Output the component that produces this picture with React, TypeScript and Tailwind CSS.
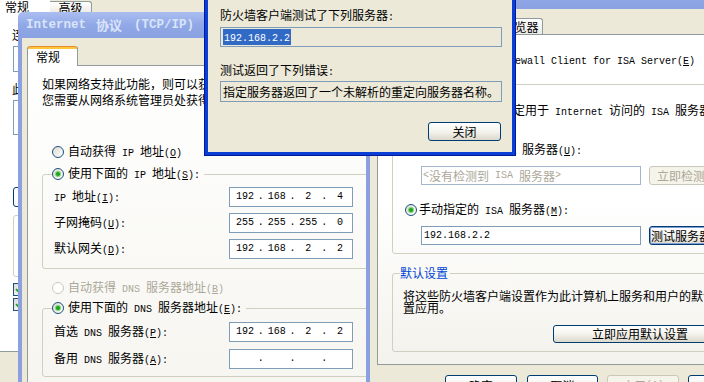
import React from 'react';

const MONO = "font-['Liberation_Mono',monospace] text-[10px] whitespace-pre";

// Splits a label into CJK runs and ASCII runs (ASCII is half width, like SimSun).
// "&X" marks the mnemonic letter, drawn underlined.
function T({ s }: { s: string }) {
  const out: React.ReactNode[] = [];
  const re = /&(.)|[ -%'-~]+|[^ -~]+/g;
  let m: RegExpExecArray | null;
  let k = 0;
  while ((m = re.exec(s)) !== null) {
    if (m[1] !== undefined) {
      const ascii = /[ -~]/.test(m[1]);
      out.push(
        <span key={k++} className={ascii ? `${MONO} underline underline-offset-[1px]` : 'underline'}>
          {m[1]}
        </span>
      );
    } else if (/^[ -~]/.test(m[0])) {
      out.push(
        <span key={k++} className={MONO}>
          {m[0]}
        </span>
      );
    } else {
      out.push(<span key={k++}>{m[0]}</span>);
    }
  }
  return <>{out}</>;
}

function Radio({ on = false, off = false }: { on?: boolean; off?: boolean }) {
  return (
    <span
      className={`flex h-[12px] w-[12px] shrink-0 items-center justify-center rounded-full border ${
        off ? 'border-[#cac8bb] bg-white' : 'border-[#1c5180] bg-gradient-to-br from-[#dcdad0] to-white'
      }`}
    >
      {on && <span className="h-[4px] w-[4px] rounded-full bg-[#21a121] shadow-[0_0_0_1px_#7ad776]" />}
    </span>
  );
}

function Check({ on = true }: { on?: boolean }) {
  return (
    <span className="flex h-[13px] w-[13px] shrink-0 items-center justify-center border border-[#1c5180] bg-gradient-to-br from-[#dcdad0] to-white">
      {on && (
        <svg width="9" height="9" viewBox="0 0 9 9">
          <path d="M1 4.2 L3.5 6.7 L8 2" stroke="#21a121" strokeWidth="1.8" fill="none" />
        </svg>
      )}
    </span>
  );
}

function Btn({
  children,
  className = '',
  disabled = false,
  focus = false,
}: {
  children: React.ReactNode;
  className?: string;
  disabled?: boolean;
  focus?: boolean;
}) {
  return (
    <div
      className={`flex shrink-0 items-center justify-center whitespace-nowrap rounded-[3px] border ${
        disabled
          ? 'border-[#c9c7ba] bg-[#f5f4ea] text-[#aca899]'
          : 'border-[#003c74] bg-gradient-to-b from-white via-[#f4f3ee] to-[#dcd8cc]'
      } ${focus ? 'shadow-[inset_0_0_0_1px_#7f9fd6]' : ''} ${className}`}
    >
      {children}
    </div>
  );
}

function Ip({ v }: { v: string[] }) {
  return (
    <div className="flex h-full w-[124px] items-center border border-[#7f9db9] bg-white pl-[3px]">
      {v.map((x, i) => (
        <React.Fragment key={i}>
          {i > 0 && <span className={`w-[8px] text-center ${MONO}`}>.</span>}
          <span className={`w-[24px] text-center ${MONO}`}>{x}</span>
        </React.Fragment>
      ))}
    </div>
  );
}

function BackWindow() {
  return (
    <div className="absolute left-0 top-0 z-0 flex h-[382px] w-[200px] flex-col">
      <div className="flex h-[13px] shrink-0 items-end">
        <div className="flex h-[13px] w-[50px] items-center bg-white pl-[5px]">常规</div>
        <div className="flex h-[12px] w-[42px] items-center justify-center rounded-tr-[3px] border-r border-t border-[#919b9c] bg-gradient-to-b from-white to-[#ecebe5]">
          高级
        </div>
      </div>
      <div className="flex h-[339px] shrink-0 flex-col border-b border-[#919b9c] bg-white pl-[12px] pt-[16px]">
        <div className="h-[12px] whitespace-nowrap leading-[12px]">
          <T s="连接时使用:" />
        </div>
        <div className="ml-[1px] mt-[5px] h-[26px] w-[160px] border border-[#7f9db9]" />
        <div className="mt-[11px] h-[12px] whitespace-nowrap leading-[12px]">
          <T s="此连接使用下列项目(&O):" />
        </div>
        <div className="ml-[1px] mt-[5px] h-[35px] w-[160px] border border-[#7f9db9]" />
        <div className="ml-[1px] mt-[52px] h-[20px] w-[80px] rounded-[3px] border border-[#003c74]" />
        <div className="ml-[1px] mt-[8px] h-[62px] w-[160px] rounded-[3px] border border-[#d0d0bf]" />
        <div className="ml-[1px] mt-[6px]">
          <Check />
        </div>
        <div className="ml-[1px] mt-[2px]">
          <Check />
        </div>
      </div>
    </div>
  );
}

const ipRows: [string, string[]][] = [
  ['IP 地址(&I):', ['192', '168', '2', '4']],
  ['子网掩码(&U):', ['255', '255', '255', '0']],
  ['默认网关(&D):', ['192', '168', '2', '2']],
];

const dnsRows: [string, string[]][] = [
  ['首选 DNS 服务器(&P):', ['192', '168', '2', '2']],
  ['备用 DNS 服务器(&A):', ['', '', '', '']],
];

function TcpIpWindow() {
  return (
    <div className="absolute left-[18px] top-[12px] z-10 flex h-[380px] w-[380px] flex-col">
      <div className="flex h-[26px] shrink-0 items-center whitespace-nowrap rounded-t-[5px] bg-gradient-to-b from-[#aabef0] via-[#91a8e7] to-[#8aa1e2] pl-[8px] font-bold text-[#dae4f8]">
        <span className="font-['Liberation_Mono',monospace] text-[12.5px]">Internet</span>
        <span className="ml-[10px] text-[13px]">协议</span>
        <span className="ml-[12px] font-['Liberation_Mono',monospace] text-[12.5px]">(TCP/IP)</span>
      </div>
      <div className="flex flex-1 flex-col border-l-[4px] border-[#8ba0e0] bg-[#ece9d8] pl-[5px] pt-[8px]">
        <div className="flex h-[19px] shrink-0">
          <div className="relative z-10 flex h-[20px] w-[51px] flex-col rounded-t-[3px] border-x border-[#919b9c] bg-white">
            <div className="h-[3px] rounded-t-[3px] bg-[#ffc83c] shadow-[inset_0_1px_0_#e68b2c]" />
            <div className="flex flex-1 items-center pb-[2px] pl-[8px]">常规</div>
          </div>
        </div>
        <div className="flex-1 border border-[#919b9c] bg-gradient-to-b from-white to-[#f6f5f0] pl-[14px] pt-[11px]">
          <p className="whitespace-nowrap leading-[13px]">
            <T s="如果网络支持此功能，则可以获取自动指派的 IP 设置。否则，" />
            <br />
            <T s="您需要从网络系统管理员处获得适当的 IP 设置。" />
          </p>

          <div className="mt-[36px] flex h-[14px] items-center gap-[4px] whitespace-nowrap pl-[10px]">
            <Radio />
            <span>
              <T s="自动获得 IP 地址(&O)" />
            </span>
          </div>

          <fieldset className="mt-[8px] w-[340px] min-w-0 rounded-[3px] border border-[#d0d0bf]">
            <legend className="ml-[9px] pr-[4px]">
              <span className="flex h-[14px] items-center gap-[4px] whitespace-nowrap">
                <Radio on />
                <span>
                  <T s="使用下面的 IP 地址(&S):" />
                </span>
              </span>
            </legend>
            <div className="flex flex-col gap-[6px] pb-[9px] pl-[11px] pt-[6px]">
              {ipRows.map(([label, v]) => (
                <div key={label} className="flex h-[20px] items-center">
                  <span className="w-[175px] whitespace-nowrap">
                    <T s={label} />
                  </span>
                  <Ip v={v} />
                </div>
              ))}
            </div>
          </fieldset>

          <div className="mt-[12px] flex h-[14px] items-center gap-[4px] whitespace-nowrap pl-[10px] text-[#aca899]">
            <Radio off />
            <span>
              <T s="自动获得 DNS 服务器地址(&B)" />
            </span>
          </div>

          <fieldset className="mt-[6px] w-[340px] min-w-0 rounded-[3px] border border-[#d0d0bf]">
            <legend className="ml-[9px] pr-[4px]">
              <span className="flex h-[14px] items-center gap-[4px] whitespace-nowrap">
                <Radio on />
                <span>
                  <T s="使用下面的 DNS 服务器地址(&E):" />
                </span>
              </span>
            </legend>
            <div className="flex flex-col gap-[7px] pb-[7px] pl-[11px] pt-[7px]">
              {dnsRows.map(([label, v]) => (
                <div key={label} className="flex h-[20px] items-center">
                  <span className="w-[175px] whitespace-nowrap">
                    <T s={label} />
                  </span>
                  <Ip v={v} />
                </div>
              ))}
            </div>
          </fieldset>
        </div>
      </div>
    </div>
  );
}

function FirewallWindow() {
  return (
    <div className="absolute left-[366px] top-[-16px] z-20 flex h-[420px] w-[380px] flex-col">
      <div className="flex h-[25px] shrink-0 items-end whitespace-nowrap rounded-t-[5px] bg-gradient-to-b from-[#aabef0] via-[#91a8e7] to-[#8aa1e2] pb-[7px] pl-[8px] font-bold text-[#c4d2f4]">
        <span className="font-['Liberation_Mono',monospace] text-[12.5px]">Microsoft Firewall Client for ISA Server 2004</span>
      </div>
      <div className="flex flex-1 flex-col border-l-[4px] border-[#8ba0e0] bg-[#ece9d8] pl-[7px] pt-[9px]">
        {/* tabs */}
        <div className="flex h-[16px] shrink-0 items-end pl-[2px]">
          <div className="relative z-10 -mb-px flex h-[19px] w-[50px] flex-col rounded-t-[3px] border-x border-[#919b9c] bg-white">
            <div className="h-[3px] rounded-t-[3px] bg-[#ffc83c]" />
            <div className="flex flex-1 items-center justify-center">常规</div>
          </div>
          <div className="flex h-[16px] w-[46px] items-center justify-center rounded-tr-[3px] border-r border-t border-[#919b9c] bg-gradient-to-b from-white to-[#ecebe5]">
            连接
          </div>
          <div className="flex h-[16px] w-[68px] items-center justify-center whitespace-nowrap rounded-tr-[3px] border-r border-t border-[#919b9c] bg-gradient-to-b from-white to-[#ecebe5]">
            <T s="Web 浏览器" />
          </div>
        </div>

        {/* tab panel */}
        <div className="h-[331px] w-[360px] shrink-0 border border-[#919b9c] bg-gradient-to-b from-white via-white to-[#f3f2ec] pt-[18px]">
          <div className="flex h-[14px] items-center gap-[5px] whitespace-nowrap pl-[59px]">
            <Check />
            <span>
              <T s="Enable Firewall Client for ISA Server(&E)" />
            </span>
          </div>

          <fieldset className="ml-[14px] mt-[9px] w-[340px] min-w-0 rounded-[3px] border border-[#d0d0bf]">
            <legend className="ml-[7px] pr-[2px] leading-[14px] text-[#0046d5]">
              <T s="ISA 服务器" />
            </legend>
            <div className="flex flex-col pb-[8px] pl-[12px] pt-[10px]">
              <div className="h-[14px] whitespace-nowrap">
                <T s="请选择自动检测或指定用于 Internet 访问的 ISA 服务器:" />
              </div>
              <div className="mt-[26px] flex h-[14px] items-center gap-[3px] whitespace-nowrap">
                <Radio />
                <span>
                  <T s="自动检测到的 ISA 服务器(&U):" />
                </span>
              </div>
              <div className="mt-[9px] flex h-[19px] gap-[8px] pl-[16px]">
                <div className="flex w-[222px] items-center whitespace-nowrap border border-[#a5b7cf] bg-white pl-[1px] text-[#aca899]">
                  <T s="<没有检测到 ISA 服务器>" />
                </div>
                <Btn disabled className="w-[82px]">
                  <T s="立即检测(&D)" />
                </Btn>
              </div>
              <div className="mt-[18px] flex h-[14px] items-center gap-[2px] whitespace-nowrap">
                <Radio on />
                <span>
                  <T s="手动指定的 ISA 服务器(&M):" />
                </span>
              </div>
              <div className="mt-[9px] flex h-[19px] gap-[8px] pl-[16px]">
                <div className="flex w-[222px] items-center border border-[#7f9db9] bg-white pl-[2px]">
                  <T s="192.168.2.2" />
                </div>
                <Btn focus className="w-[82px]">
                  <T s="测试服务器(&T)" />
                </Btn>
              </div>
            </div>
          </fieldset>

          <fieldset className="ml-[14px] mt-[12px] w-[340px] min-w-0 rounded-[3px] border border-[#d0d0bf]">
            <legend className="ml-[7px] pr-[2px] leading-[14px] text-[#0046d5]">默认设置</legend>
            <div className="flex flex-col pb-[8px] pl-[10px] pt-[10px]">
              <p className="whitespace-nowrap leading-[12px]">
                将这些防火墙客户端设置作为此计算机上服务和用户的默认设
                <br />
                置应用。
              </p>
              <Btn className="ml-[150px] mt-[11px] h-[18px] w-[174px]">立即应用默认设置</Btn>
            </div>
          </fieldset>
        </div>

        {/* dialog buttons */}
        <div className="ml-[68px] mt-[10px] flex h-[21px] shrink-0">
          <Btn className="w-[72px]">确定</Btn>
          <Btn className="ml-[10px] w-[71px]">取消</Btn>
          <Btn disabled className="ml-[9px] w-[72px]">
            <T s="应用(&A)" />
          </Btn>
          <Btn className="ml-[9px] w-[72px]">帮助</Btn>
        </div>
      </div>
    </div>
  );
}

function TestDialog() {
  return (
    <div className="absolute left-[205px] top-0 z-30 flex h-[155px] w-[310px] flex-col border-x-[3px] border-b-[3px] border-[#0a3ed4] bg-[#ece9d8] pl-[12px] pr-[10px] pt-[9px] shadow-[0_0_0_1px_#001a9c]">
      <div className="h-[12px] whitespace-nowrap leading-[12px]">
        <T s="防火墙客户端测试了下列服务器:" />
      </div>
      <div className="mt-[6px] flex h-[20px] shrink-0 items-center border border-[#7f9db9] pl-[2px]">
        <span className="bg-[#316ac5] px-px leading-[13px] text-white">
          <T s="192.168.2.2" />
        </span>
      </div>
      <div className="mt-[17px] h-[12px] whitespace-nowrap leading-[12px]">
        <T s="测试返回了下列错误:" />
      </div>
      <div className="mt-[5px] flex h-[21px] shrink-0 items-center whitespace-nowrap border border-[#7f9db9] pl-[2px]">
        指定服务器返回了一个未解析的重定向服务器名称。
      </div>
      <Btn className="mr-[1px] mt-[20px] h-[19px] w-[73px] self-end">关闭</Btn>
    </div>
  );
}

export default function App() {
  return (
    <div className="relative h-[382px] w-[704px] overflow-hidden bg-[#ece9d8] font-['Noto_Sans_CJK_SC','Noto_Sans',sans-serif] text-[12px] leading-[14px] text-black">
      <BackWindow />
      <TcpIpWindow />
      <FirewallWindow />
      <TestDialog />
    </div>
  );
}
